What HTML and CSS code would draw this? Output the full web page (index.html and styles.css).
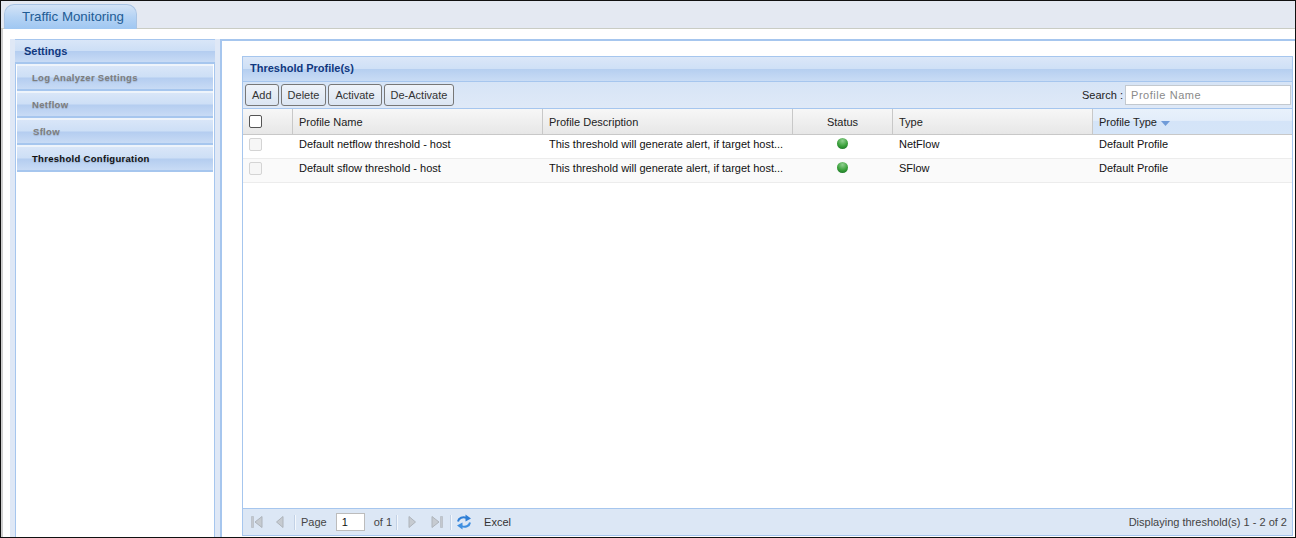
FILE: index.html
```html
<!DOCTYPE html>
<html lang="en">
<head>
<meta charset="utf-8">
<title>Traffic Monitoring</title>
<link rel="stylesheet" href="styles.css">
</head>
<body>
<div class="frame">
  <div class="tabbar"><div class="tab">Traffic Monitoring</div></div>
  <div class="main">
    <aside class="side">
      <div class="side-inner">
        <div class="acc acc-head">Settings</div>
        <div class="acc sub">Log Analyzer Settings</div>
        <div class="acc sub">Netflow</div>
        <div class="acc sub sf">Sflow</div>
        <div class="acc sub on">Threshold Configuration</div>
      </div>
    </aside>
    <section class="content">
      <div class="panel">
        <div class="panel-title">Threshold Profile(s)</div>
        <div class="toolbar">
          <button class="btn">Add</button>
          <button class="btn">Delete</button>
          <button class="btn">Activate</button>
          <button class="btn">De-Activate</button>
          <label class="search">Search :<input class="search-in" placeholder="Profile Name"></label>
        </div>
        <div class="row head">
          <div class="c c0"><span class="cb dark"></span></div>
          <div class="c c1">Profile Name</div>
          <div class="c c2">Profile Description</div>
          <div class="c c3 ctr">Status</div>
          <div class="c c4">Type</div>
          <div class="c c5 sorted">Profile Type <svg class="sort" width="9" height="5" viewBox="0 0 9 5"><path d="M0 0h9L4.500 5z" fill="#6f9bd8"/></svg></div>
        </div>
        <div class="row body">
          <div class="c c0"><span class="cb"></span></div>
          <div class="c c1">Default netflow threshold - host</div>
          <div class="c c2"><span class="clip">This threshold will generate alert, if target host...</span></div>
          <div class="c c3 ctr"><span class="dot"></span></div>
          <div class="c c4">NetFlow</div>
          <div class="c c5">Default Profile</div>
        </div>
        <div class="row body alt">
          <div class="c c0"><span class="cb"></span></div>
          <div class="c c1">Default sflow threshold - host</div>
          <div class="c c2"><span class="clip">This threshold will generate alert, if target host...</span></div>
          <div class="c c3 ctr"><span class="dot"></span></div>
          <div class="c c4">SFlow</div>
          <div class="c c5">Default Profile</div>
        </div>
        <div class="fill"></div>
        <div class="pager">
          <svg class="ic first" width="14" height="14" viewBox="0 0 14 14"><path d="M1.500 1.500h2v11h-2z" fill="#c3c8ce" stroke="#b0b6bd" stroke-width=".6"/><path d="M12 1.500v11L5 7z" fill="#c6cbd1" stroke="#aeb4bb"/></svg>
          <svg class="ic prev" width="10" height="14" viewBox="0 0 10 14"><path d="M8 1.500v11L1.500 7z" fill="#c6cbd1" stroke="#aeb4bb"/></svg>
          <span class="sep"></span>
          <span class="pg">Page</span>
          <input class="pg-in" value="1">
          <span class="pg of">of 1</span>
          <span class="sep"></span>
          <svg class="ic next" width="10" height="14" viewBox="0 0 10 14"><path d="M2 1.500v11L8.500 7z" fill="#c6cbd1" stroke="#aeb4bb"/></svg>
          <svg class="ic last" width="14" height="14" viewBox="0 0 14 14"><path d="M2 1.500v11L9 7z" fill="#c6cbd1" stroke="#aeb4bb"/><path d="M10.500 1.500h2v11h-2z" fill="#c3c8ce" stroke="#b0b6bd" stroke-width=".6"/></svg>
          <span class="sep"></span>
          <svg class="ic refresh" width="16" height="16" viewBox="0 0 16 16"><path d="M2 7.500C2.600 3.800 6.800 2.300 10.500 3.900" fill="none" stroke="#2f7fd6" stroke-width="2"/><path d="M9.500 .5L15 4.500 9.500 7.500z" fill="#2f7fd6"/><path d="M14 8.500C13.400 12.200 9.200 13.700 5.500 12.100" fill="none" stroke="#3f8fe0" stroke-width="2"/><path d="M6.500 15.500L1 11.500 6.500 8.500z" fill="#3f8fe0"/></svg>
          <span class="pg excel">Excel</span>
          <span class="disp">Displaying threshold(s) 1 - 2 of 2</span>
        </div>
      </div>
    </section>
  </div>
</div>
</body>
</html>
```

FILE: styles.css
```css
* { box-sizing: border-box; }
html, body { margin: 0; height: 100%; overflow: hidden; background: #fff; }
body { font: 11px "Liberation Sans", Arial, sans-serif; color: #111; }
.frame { width: 1296px; height: 538px; border: 1px solid #111; display: flex; flex-direction: column; overflow: hidden; }

.tabbar { height: 28px; flex: none; padding: 3px 0 0 3px; background: #e4e9f2; border-bottom: 1px solid #c9ccc4; display: flex; }
.tab { width: 133px; height: 25px; padding: 3px 0 0 17px; font-size: 13.300px; line-height: 18px; color: #1f5c94; background: linear-gradient(#d3e3f6, #b5d3f4 50%, #9fc7f2); border: 1px solid #a9c4e4; border-bottom: 0; border-radius: 10px 10px 0 0; }

.main { flex: 1; display: flex; min-height: 0; padding: 10px 0 0 7px; border-left: 2px solid #cfcfcf; }
.side { width: 210px; flex: none; padding: 0 5px; background: #dfe8f6; }
.side-inner { height: 100%; background: #fff; border: 1px solid #a6c6ee; border-bottom: 0; }
.acc { font-weight: bold; background: linear-gradient(#d9e6f8, #cddff6 48%, #b4cdf0 52%, #c8dbf5); }
.acc-head { margin: -1px -1px 0; height: 25px; padding-left: 9px; color: #10387f; font-size: 11px; line-height: 23px; border-top: 1px solid #a6c6ee; border-bottom: 2px solid #a6c6ee; }
.sub { height: 27px; margin: 0 1px; padding: 2px 0 0 15px; font-size: 9.500px; line-height: 19px; letter-spacing: .3px; color: #7d7d7d; text-shadow: 0 1px 1px rgba(0, 0, 0, .14); border-top: 2px solid #eef4fb; border-bottom: 2px solid #a6c6ee; }
.sf { padding-left: 16px; }
.on { color: #111; }

.content { flex: 1; min-width: 0; padding: 15px 2px 1px 20px; background: #fff; border-top: 2px solid #a6c6ee; border-left: 2px solid #a6c6ee; }
.panel { height: 100%; display: flex; flex-direction: column; border: 1px solid #a6c6ee; border-bottom: 0; }
.panel-title { height: 25px; flex: none; padding-left: 7px; font-size: 11px; font-weight: bold; line-height: 22px; color: #10387f; background: linear-gradient(#dbe7f8, #cfe0f6 48%, #b6cff0 52%, #c9dcf5); border-bottom: 1px solid #a6c6ee; }
.toolbar { height: 27px; flex: none; display: flex; align-items: center; gap: 2px; padding: 0 1px 0 2px; background: linear-gradient(#d6e4f6, #dfe9f7); border-bottom: 1px solid #a6c6ee; }
.btn { height: 22px; padding: 0 6px; font: 11px "Liberation Sans", Arial, sans-serif; color: #333; background: linear-gradient(#eff3f9, #dbe5f2); border: 1px solid #777; border-radius: 3px; }
.search { margin-left: auto; display: flex; align-items: center; gap: 2px; color: #222; }
.search-in { width: 166px; height: 20px; padding: 0 5px; border: 1px solid #c3c9cf; font: 11px "Liberation Sans", Arial, sans-serif; letter-spacing: .55px; background: #fff; }
.search-in::placeholder { color: #8a8a8a; opacity: 1; }

.row { display: flex; flex: none; }
.head { height: 26px; line-height: 27px; color: #222; background: linear-gradient(#f7f7f7, #e7e7e7); border-bottom: 1px solid #c8c8c8; }
.body { height: 24px; line-height: 18px; background: #fff; border-bottom: 1px solid #ececec; }
.alt { background: #fafafa; }
.c { flex: none; padding-left: 6px; white-space: nowrap; overflow: hidden; }
.head .c + .c { border-left: 1px solid #c8c8c8; }
.body .c + .c { border-left: 1px solid transparent; }
.c0 { width: 49px; display: flex; align-items: center; }
.body .c0 { padding-bottom: 4px; }
.c1, .c2 { width: 250px; }
.c3 { width: 100px; padding-left: 0; }
.c4 { width: 200px; }
.c5 { flex: 1; }
.ctr { text-align: center; }
.clip { display: block; width: 238px; overflow: hidden; }
.sorted { background: linear-gradient(#e8f1fb, #e3edfa 45%, #d4e4f8 50%, #d5e5f8); }
.sort { margin-left: 1px; }
.cb { display: block; width: 13px; height: 13px; background: #f6f6f6; border: 1px solid #d4d4d4; border-radius: 2px; }
.cb.dark { background: #fff; border-color: #555; }
.dot { display: inline-block; width: 11px; height: 11px; margin-top: 3px; vertical-align: top; border-radius: 50%; background: radial-gradient(circle at 50% 25%, #8fcf8f, #3aa03a 55%, #1f7a2a 85%, #2d6a4a); }

.fill { flex: 1; min-height: 0; background: #fff; }
.pager { height: 28px; flex: none; display: flex; align-items: center; padding: 0 5px 0 7px; color: #444; background: #dce7f5; border-top: 1px solid #a6c6ee; border-bottom: 1px solid #a6c6ee; }
.ic { flex: none; display: block; }
.prev { margin-left: 11px; margin-right: 9px; }
.sep { flex: none; width: 2px; height: 15px; background: #f3f7fc; border-left: 1px solid #c3d2e6; }
.pg { margin-left: 5px; }
.pg-in { width: 29px; height: 18px; margin-left: 9px; padding: 0 5px; font: 11px "Liberation Sans", Arial, sans-serif; color: #111; background: #fff; border: 1px solid #bcbcbc; }
.of { margin-left: 9px; margin-right: 4px; }
.next { margin-left: 9px; margin-right: 13px; }
.last { margin-right: 6px; }
.refresh { margin-left: 4px; }
.excel { margin-left: 12px; color: #333; }
.disp { margin-left: auto; color: #444; }
```
